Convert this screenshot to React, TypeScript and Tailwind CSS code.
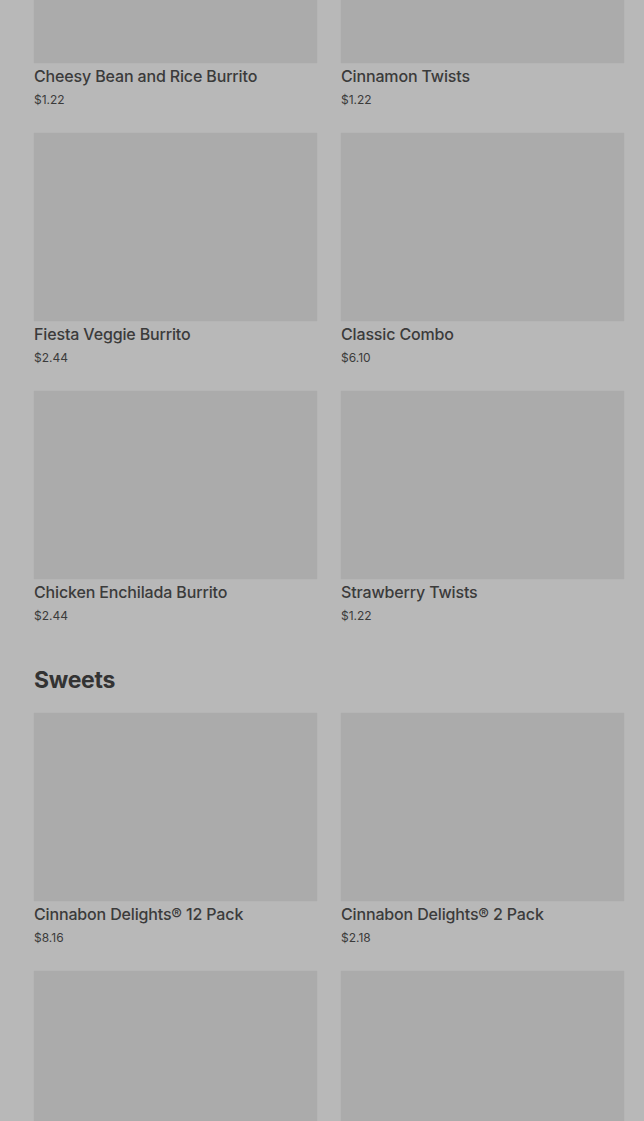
import React from "react";

type Item = { name: string; price: string };

const section1: Item[] = [
  { name: "Cheesy Bean and Rice Burrito", price: "$1.22" },
  { name: "Cinnamon Twists", price: "$1.22" },
  { name: "Fiesta Veggie Burrito", price: "$2.44" },
  { name: "Classic Combo", price: "$6.10" },
  { name: "Chicken Enchilada Burrito", price: "$2.44" },
  { name: "Strawberry Twists", price: "$1.22" },
];

const sweets: Item[] = [
  { name: "Cinnabon Delights® 12 Pack", price: "$8.16" },
  { name: "Cinnabon Delights® 2 Pack", price: "$2.18" },
  { name: "", price: "" },
  { name: "", price: "" },
];

function Card({ item }: { item: Item }) {
  return (
    <div className="flex flex-col h-[234px]">
      <div className="h-[188px] bg-[#ababab] shadow-[0_0_1px_rgba(0,0,0,0.08)]" />
      {item.name && (
        <>
          <div className="mt-[3px] text-[16px] leading-[20px] font-medium text-[#3b3b3b] tracking-[-0.15px]">
            {item.name}
          </div>
          <div className="mt-[6px] text-[12px] leading-[16px] text-[#3b3b3b]">{item.price}</div>
        </>
      )}
    </div>
  );
}

export default function App() {
  return (
    <div
      className="w-[644px] h-[1121px] overflow-hidden bg-[#b8b8b8]"
      style={{ fontFamily: "Inter, 'Noto Sans', sans-serif" }}
    >
      <div className="mt-[-125px] pl-[34px] pr-[20px]">
        <div className="grid grid-cols-2 gap-x-[24px] gap-y-[24px]">
          {section1.map((it, i) => (
            <Card key={i} item={it} />
          ))}
        </div>
        <h2 className="mt-[39px] text-[23px] leading-[32px] font-bold text-[#333333] tracking-[-0.3px]">Sweets</h2>
        <div className="mt-[17px] grid grid-cols-2 gap-x-[24px] gap-y-[24px]">
          {sweets.map((it, i) => (
            <Card key={i} item={it} />
          ))}
        </div>
      </div>
    </div>
  );
}
